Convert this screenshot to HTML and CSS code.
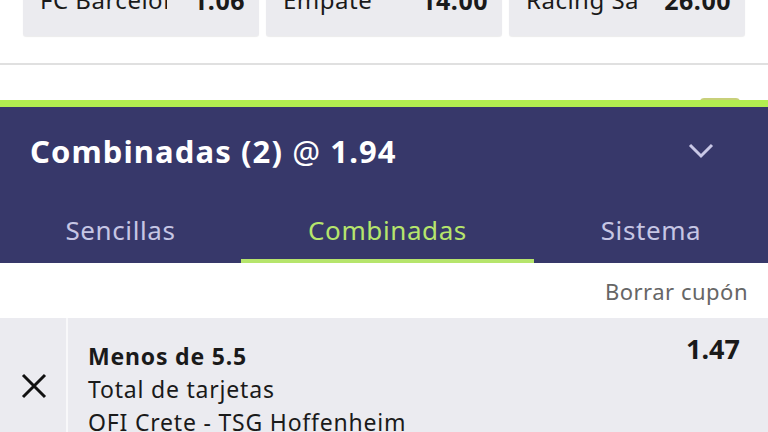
FILE: index.html
```html
<!DOCTYPE html>
<html lang="es">
  <head>
    <meta charset="UTF-8" />
    <title>Cupón de apuestas</title>
    <link rel="stylesheet" href="styles.css">
  </head>
  <body>
    <div class="behind">
      <div class="odds-row">
        <div class="odd">
          <span class="odd-name">FC Barcelona</span>
          <span class="odd-value">1.06</span>
        </div>
        <div class="odd">
          <span class="odd-name">Empate</span>
          <span class="odd-value">14.00</span>
        </div>
        <div class="odd">
          <span class="odd-name">Racing Santander</span>
          <span class="odd-value">26.00</span>
        </div>
      </div>
      <div class="market-row">
        <span class="market-name">Total de tarjetas</span>
        <span class="market-badge"></span>
      </div>
    </div>

    <div class="slip">
      <div class="slip-head">
        <h1>Combinadas (2) <span class="at">@</span> 1.94</h1>
        <svg class="chevron" width="26" height="16" viewBox="0 0 26 16">
          <path d="M2 2 L13 13 L24 2" fill="none" stroke="#c9c8e6" stroke-width="3" />
        </svg>
      </div>

      <div class="tabs">
        <div class="tab">Sencillas</div>
        <div class="tab active">Combinadas</div>
        <div class="tab">Sistema</div>
      </div>

      <div class="slip-tools">
        <span class="clear">Borrar cupón</span>
      </div>

      <div class="bet">
        <div class="bet-remove">
          <svg width="28" height="26" viewBox="0 0 28 26">
            <path d="M3 2 L25 24 M25 2 L3 24" stroke="#111" stroke-width="3" />
          </svg>
        </div>
        <div class="bet-info">
          <div class="bet-top">
            <span class="bet-pick">Menos de 5.5</span>
            <span class="bet-odd">1.47</span>
          </div>
          <div class="bet-market">Total de tarjetas</div>
          <div class="bet-event">OFI Crete - TSG Hoffenheim</div>
        </div>
      </div>
    </div>
  </body>
</html>
```

FILE: styles.css
```css
html,
body {
  margin: 0;
  height: 100%;
  overflow: hidden;
}

body {
  background: #fff;
  color: #1a1a1a;
  font-family: "Noto Sans", "Open Sans", sans-serif;
}

.behind {
  height: 100px;
  overflow: hidden;
}

.odds-row {
  display: flex;
  gap: 7px;
  margin: -20px 23px 0;
}

.odd {
  flex: 1;
  min-width: 0;
  display: flex;
  align-items: flex-start;
  height: 56px;
  padding: 3px 14px 0 17px;
  background: #ebebef;
  border-radius: 3px;
  box-shadow: 0 1px 1px rgba(0, 0, 0, 0.08);
  box-sizing: border-box;
}

.odd-name {
  flex: 1;
  min-width: 0;
  margin-right: 26px;
  font-size: 24px;
  letter-spacing: 0.5px;
  overflow: hidden;
  white-space: nowrap;
}

.odd-value {
  font-size: 25px;
  font-weight: bold;
  letter-spacing: 0.5px;
}

.market-row {
  display: flex;
  justify-content: space-between;
  margin-top: 27px;
  border-top: 2px solid #e0e0e0;
  padding: 27px 28px 0 31px;
}

.market-name {
  font-size: 26px;
}

.market-badge {
  width: 40px;
  height: 30px;
  margin-top: 6px;
  background: #c8d07a;
  border-radius: 4px;
}

.slip {
  border-top: 7px solid #b2ee50;
}

.slip-head {
  display: flex;
  justify-content: space-between;
  align-items: center;
  background: #37386a;
  height: 88px;
  padding: 0 54px 0 30px;
}

h1 {
  margin: 0;
  color: #fff;
  font-size: 31px;
  font-weight: bold;
  letter-spacing: 1.1px;
}

.at {
  font-weight: normal;
}

.tabs {
  display: grid;
  grid-template-columns: 241px 293px 1fr;
  background: #37386a;
  height: 68px;
}

.tab {
  display: flex;
  justify-content: center;
  align-items: center;
  padding-top: 6px;
  font-size: 26px;
  letter-spacing: 0.6px;
  color: #c6c6e4;
  border-bottom: 4px solid transparent;
}

.tab.active {
  color: #b6e56c;
  border-bottom-color: #b6e56c;
}

.slip-tools {
  display: flex;
  justify-content: flex-end;
  align-items: center;
  height: 55px;
  padding-right: 20px;
}

.clear {
  font-size: 22px;
  letter-spacing: 0.5px;
  color: #666;
}

.bet {
  display: flex;
  background: #ebebf0;
  min-height: 140px;
}

.bet-remove {
  width: 68px;
  display: flex;
  justify-content: center;
  align-items: center;
  padding-left: 2px;
  padding-bottom: 4px;
  border-right: 2px solid #f8f8fa;
  box-sizing: border-box;
}

.bet-info {
  flex: 1;
  padding: 12px 28px 0 20px;
}

.bet-top {
  display: flex;
  justify-content: space-between;
  align-items: flex-start;
}

.bet-pick {
  margin-top: 10px;
  font-size: 23px;
  font-weight: bold;
  letter-spacing: 0.8px;
}

.bet-odd {
  font-size: 27px;
  font-weight: bold;
}

.bet-market,
.bet-event {
  font-size: 23px;
  letter-spacing: 0.8px;
  margin-top: 1px;
}
```
